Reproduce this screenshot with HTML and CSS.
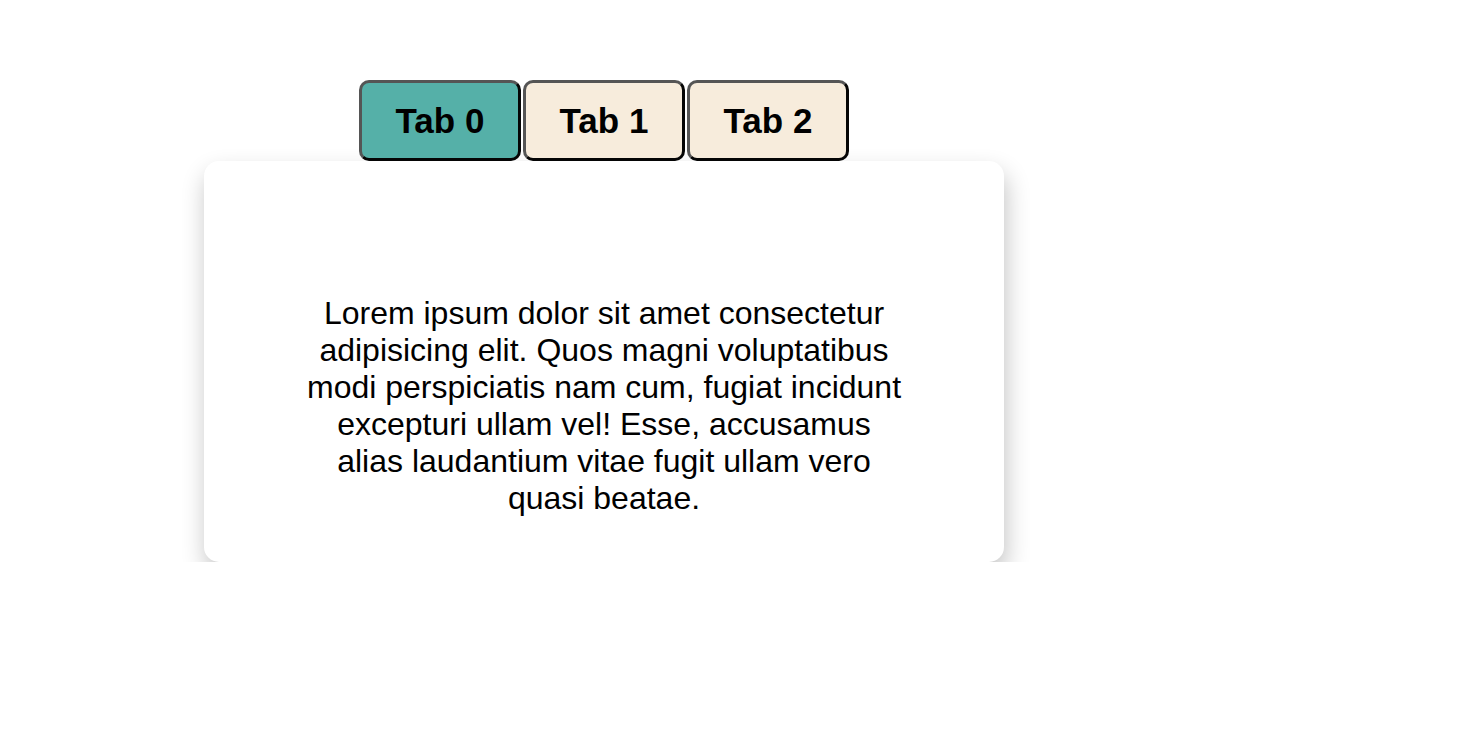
FILE: index.html
```html
<!DOCTYPE html>
<html lang="en">
<head>
<meta charset="utf-8">
<title>Tabs</title>
<link rel="stylesheet" href="styles.css">
</head>
<body>
<div class="page">
  <div class="tabs-widget">
    <div class="tab-bar">
      <button class="tab tab-active">Tab 0</button>
      <button class="tab">Tab 1</button>
      <button class="tab">Tab 2</button>
    </div>
    <div class="panel">
      <p class="panel-text">Lorem ipsum dolor sit amet consectetur adipisicing elit. Quos magni voluptatibus modi perspiciatis nam cum, fugiat incidunt excepturi ullam vel! Esse, accusamus alias laudantium vitae fugit ullam vero quasi beatae.</p>
    </div>
  </div>
</div>
</body>
</html>
```
FILE: styles.css
```css
html, body {
  margin: 0;
  padding: 0;
  background: #ffffff;
  font-family: "Liberation Sans", Arial, Helvetica, sans-serif;
  color: #000;
}

.page {
  padding: 80px 0 0 204px;
}

.tabs-widget {
  width: 800px;
  display: flex;
  flex-direction: column;
  align-items: center;
}

.tab-bar {
  display: flex;
  gap: 2px;
  position: relative;
  z-index: 1;
}

.tab {
  box-sizing: border-box;
  width: 162px;
  height: 81px;
  border-width: 3px;
  border-style: solid;
  border-color: #555555 #050505 #050505 #555555;
  border-radius: 10px;
  background: #f7ecdc;
  font-family: "Liberation Sans", Arial, Helvetica, sans-serif;
  font-weight: 700;
  font-size: 35px;
  color: #000;
  padding: 0;
  cursor: pointer;
}

.tab-active {
  background: #55b0a8;
}

.panel {
  box-sizing: border-box;
  width: 800px;
  height: 401px;
  background: #ffffff;
  border-radius: 15px;
  box-shadow: 2px 12px 24px rgba(0, 0, 0, 0.24);
  display: flex;
  justify-content: center;
  padding-top: 134px;
}

.panel-text {
  margin: 0;
  width: 600px;
  text-align: center;
  font-size: 32px;
  line-height: 37px;
}
```
